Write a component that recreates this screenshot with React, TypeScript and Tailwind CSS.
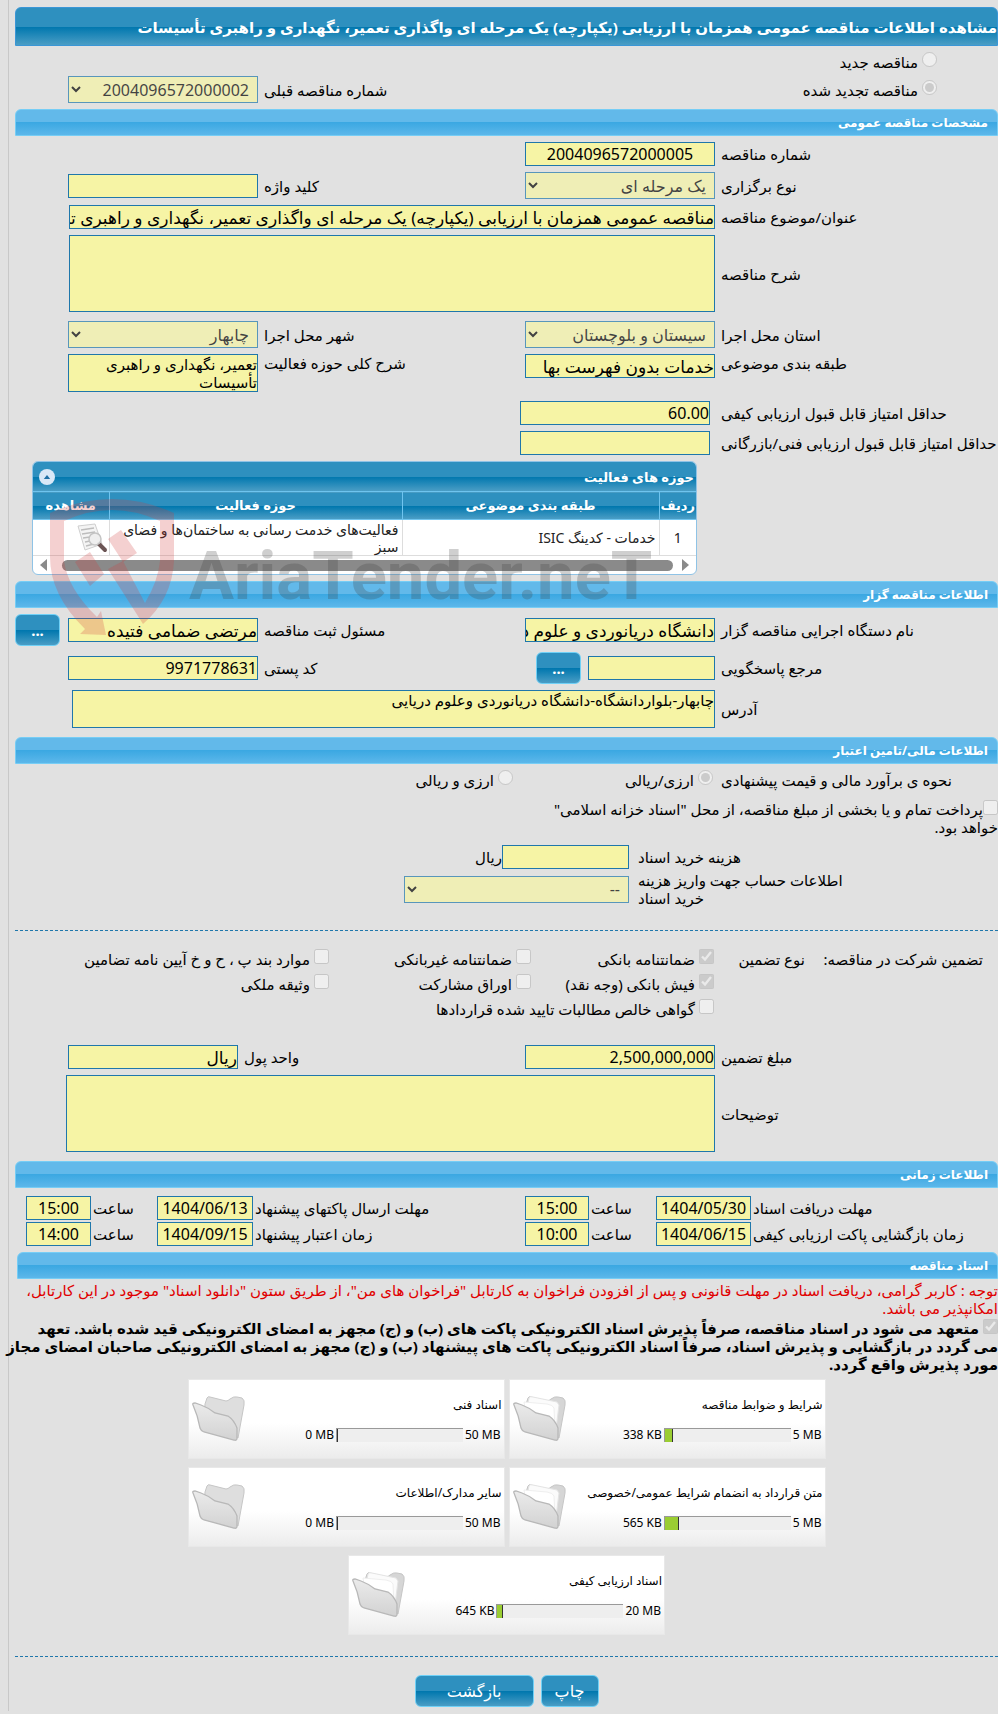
import React from 'react';
import { clsx } from 'clsx';

const BLUE = 'bg-[linear-gradient(#2e90bf_0%,#2e90bf_50%,#0077ae_51%,#4a9dc5_100%)]';
const SKY = 'bg-[linear-gradient(#62b9ea_0%,#62b9ea_48%,#3ba8e2_50%,#5cb7ea_100%)]';
const FIELD = 'block w-full min-w-0 border border-[#1f77ab] bg-[#f6f4a5] text-black outline-none';

const TITLE = 'مناقصه عمومی همزمان با ارزیابی (یکپارچه) یک مرحله ای واگذاری تعمیر، نگهداری و راهبری تأسیسات';

type FieldProps = {
  id: string;
  value?: string;
  className?: string;
};

const TextBox = ({ id, value = '', className = 'text-base' }: FieldProps) => (
  <input id={id} type="text" readOnly value={value} className={clsx(FIELD, 'h-6', className)} />
);

const Area = ({ id, value = '', className }: FieldProps) => (
  <textarea
    id={id}
    readOnly
    value={value}
    className={clsx(FIELD, 'resize-none overflow-hidden text-[15px] leading-[18px]', className)}
  />
);

const Select = ({ id, value = '' }: FieldProps) => (
  <select
    id={id}
    disabled
    className="block h-[27px] w-full border border-[#1f77ab] bg-[#f6f4a5] px-1 text-base text-black opacity-70"
  >
    <option>{value}</option>
  </select>
);

const Label = ({ htmlFor, children, className = 'pe-1.5' }: { htmlFor: string; children: React.ReactNode; className?: string }) => (
  <label htmlFor={htmlFor} className={clsx('text-end whitespace-nowrap', className)}>
    {children}
  </label>
);

const SectionHeader = ({ children, className }: { children: React.ReactNode; className?: string }) => (
  <h2
    className={clsx(
      'flex h-[27px] items-center rounded-t-md border border-[#76cdf5] px-[9px] text-xs font-bold text-white',
      SKY,
      className,
    )}
  >
    {children}
  </h2>
);

const BlueButton = ({ children, className }: { children: React.ReactNode; className?: string }) => (
  <button type="button" className={clsx('h-8 rounded-md border border-[#6fd0f6] text-white', BLUE, className)}>
    {children}
  </button>
);

type ChoiceProps = {
  type: 'radio' | 'checkbox';
  name?: string;
  label: string;
  checked?: boolean;
  className?: string;
};

const Choice = ({ type, name, label, checked = false, className }: ChoiceProps) => (
  <label className={clsx('flex items-start gap-1 whitespace-nowrap', className)}>
    <input type={type} name={name} checked={checked} disabled readOnly className="size-[15px] shrink-0" />
    <span className="pt-px">{label}</span>
  </label>
);

const ROW = 'grid grid-cols-[283px_190px_1fr_190px_53px] items-center';
const WIDE_ROW = 'grid grid-cols-[283px_1fr_54px] items-center';
const TIME_ROW = 'grid grid-cols-[247px_95px_67px_64px_1fr_96px_66px_65px_11px] items-center';

const DocumentIcon = () => (
  <svg viewBox="0 0 32 30" className="h-[30px] w-8">
    <path d="M2 3 19 1 26 21 9 27Z" fill="#f4f4f4" stroke="#cfcfcf" />
    <path d="M5 7 18 5M6 11l13-2M7 15l7-1M9 19l5-1M10 23l8-2" stroke="#bdbdbd" strokeWidth="1.5" />
    <path d="m23 21 6 6" stroke="#6b5555" strokeWidth="4" strokeLinecap="round" />
    <circle cx="19" cy="16" r="6" fill="#eee" fillOpacity=".9" stroke="#c4c4c4" strokeWidth="1.5" />
  </svg>
);

const FolderIcon = ({ full }: { full: boolean }) => (
  <svg viewBox="0 0 54 48" className="h-12 w-[54px] shrink-0">
    <defs>
      <linearGradient id="folder" x1="0" y1="0" x2="0" y2="1">
        <stop offset="0" stopColor="#ebebeb" />
        <stop offset="1" stopColor="#d2d2d2" />
      </linearGradient>
    </defs>
    <path
      d="M13 9 15 3Q16 1 18 2L34 6Q36 6 38 4 42 1 45 2L50 3Q53 5 52 10L46 43 40 40 12 26Z"
      fill={full ? '#d6d6d6' : '#dedede'}
      stroke="#c6c6c6"
    />
    {full && (
      <>
        <path d="M16 3Q17 1 20 2L44 7 46 10 43 34 12 24Z" fill="#fbfbfb" stroke="#e4e4e4" />
        <path d="M11 7 34 9Q40 10 41 13L42 34 14 26Z" fill="#fff" stroke="#efefef" />
      </>
    )}
    <path
      d="M1 10Q0 8 3 8L9 10Q17 13 23 18L36 21Q42 25 45 33V43Q45 46 42 45L12 37Q9 36 8 33 6 21 1 10Z"
      fill="url(#folder)"
      stroke="#b8b8b8"
      strokeWidth="1.3"
    />
  </svg>
);

const Watermark = () => (
  <svg viewBox="0 0 620 150" direction="ltr" className="pointer-events-none absolute top-[34px] left-3.5 z-10 h-[150px] w-[620px]">
    <g fill="#cf3b3b" fillOpacity=".24">
      <path d="M4 18Q66-10 128 18V66Q126 104 97 129L62 74 77 66 99 108Q112 86 114 66V26Q66 4 18 26V66Q22 94 51 122L55 116 60 140 34 139 39 134Q4 100 4 62Z" />
      <path d="m62 44 13-9 16 23-14 9ZM29 67l15-10 14 22-14 12Z" />
    </g>
    <text x="143" y="104" fontSize="67" className="fill-[#404040] font-[Roboto,sans-serif] font-bold" fillOpacity=".25">
      AriaTender.neT
    </text>
  </svg>
);

const ActivityTable = () => (
  <div className="relative ms-[301px] me-[17px]">
    <div className="overflow-hidden rounded-md border border-[#8fc3e6] bg-white">
      <div className={clsx('flex h-[29px] items-center justify-between ps-0.5 pe-1.5 text-[13px] font-bold text-white', BLUE)}>
        <span>حوزه های فعالیت</span>
        <button type="button" aria-label="بستن" className="flex size-4 items-center justify-center rounded-full bg-[#d9e8f7]">
          <svg viewBox="0 0 8 5" className="h-1 w-2">
            <path d="M0 5 4 0l4 5Z" fill="#1f6fa5" />
          </svg>
        </button>
      </div>
      <table className="w-full table-fixed border-collapse text-sm leading-[17px] text-[#222]">
        <colgroup>
          <col className="w-[37px]" />
          <col className="w-[257px]" />
          <col />
          <col className="w-[76px]" />
        </colgroup>
        <thead>
          <tr className={clsx('h-7 border-t border-b border-[#6fc4ef] text-[13px] whitespace-nowrap text-white', BLUE)}>
            <th className="border-e border-[#6fc4ef] p-0">ردیف</th>
            <th className="border-e border-[#6fc4ef] p-0">طبقه بندی موضوعی</th>
            <th className="border-e border-[#6fc4ef] p-0">حوزه فعالیت</th>
            <th className="p-0">مشاهده</th>
          </tr>
        </thead>
        <tbody>
          <tr className="h-9 border-b border-[#ddd]">
            <td className="border-e border-[#ddd] p-0 text-center">1</td>
            <td className="border-e border-[#ddd] px-[3px] py-0">خدمات - کدینگ ISIC</td>
            <td className="border-e border-[#ddd] px-[3px] py-0">
              فعالیت‌های خدمت رسانی به ساختمان‌ها و فضای
              <br />
              سبز
            </td>
            <td className="p-0 ps-px">
              <DocumentIcon />
            </td>
          </tr>
        </tbody>
      </table>
      <div className="flex h-[18px] items-center justify-between px-[7px]">
        <svg viewBox="0 0 7 12" className="h-3 w-[7px]">
          <path d="M0 0v12l7-6Z" fill="#8a8a8a" />
        </svg>
        <div className="ms-[9px] me-[15px] h-[11px] flex-1 rounded-full bg-[#8a8a8a]" />
        <svg viewBox="0 0 7 12" className="h-3 w-[7px]">
          <path d="M7 0v12L0 6Z" fill="#8a8a8a" />
        </svg>
      </div>
    </div>
    <Watermark />
  </div>
);

type Doc = { title: string; used: string; limit: string; usedKb: number; limitKb: number };

const docs: Doc[] = [
  { title: 'شرایط و ضوابط مناقصه', used: '338 KB', limit: '5 MB', usedKb: 338, limitKb: 5120 },
  { title: 'اسناد فنی', used: '0 MB', limit: '50 MB', usedKb: 0, limitKb: 51200 },
  { title: 'متن قرارداد به انضمام شرایط عمومی/خصوصی', used: '565 KB', limit: '5 MB', usedKb: 565, limitKb: 5120 },
  { title: 'سایر مدارک/اطلاعات', used: '0 MB', limit: '50 MB', usedKb: 0, limitKb: 51200 },
  { title: 'اسناد ارزیابی کیفی', used: '645 KB', limit: '20 MB', usedKb: 645, limitKb: 20480 },
];

const DocCard = ({ doc }: { doc: Doc }) => (
  <div className="flex h-20 w-[317px] items-center justify-between border border-[#e8e8e8] bg-[linear-gradient(#fff_0%,#fff_55%,#ececec_100%)] ps-0.5 pe-[3px]">
    <div className="flex flex-col gap-3">
      <span className="text-xs leading-5">{doc.title}</span>
      <div className="flex items-center gap-0.5 ps-px text-xs leading-4">
        <span dir="ltr">{doc.limit}</span>
        <div dir="ltr" className="h-3.5 w-[127px] border-t border-l border-[#999] bg-[#eee]">
          <div
            className="h-full border-r border-[#333] bg-[#9acd32]"
            style={{ width: `${(doc.usedKb / doc.limitKb) * 100}%`, minWidth: doc.usedKb ? 6 : 1 }}
          />
        </div>
        <span dir="ltr">{doc.used}</span>
      </div>
    </div>
    <FolderIcon full={doc.usedKb > 0} />
  </div>
);

const Divider = () => <hr className="border-t border-dashed border-[#1f77ab]" />;

export default function App() {
  return (
    <div dir="rtl" className="min-h-screen overflow-hidden bg-[#e1e1e1] pe-2 font-['Noto_Sans','DejaVu_Sans',sans-serif] text-[15px] leading-[18px] text-black">
      <main className="flex flex-col gap-1.5 border-e border-[#c8c8c8] pe-1.5 pt-[7px] pb-1">
        <h1 className={clsx('flex h-[39px] items-center overflow-hidden rounded-t-md border border-[#3a96d6] text-[15px] font-bold whitespace-nowrap text-white', BLUE)}>
          مشاهده اطلاعات {TITLE}
        </h1>

        <div>
          <Choice type="radio" name="kind" label="مناقصه جدید" className="h-6 ps-[61px]" />
          <div className={ROW}>
            <Choice type="radio" name="kind" label="مناقصه تجدید شده" checked className="ps-[61px]" />
            <span />
            <Label htmlFor="prev">شماره مناقصه قبلی</Label>
            <Select id="prev" value="2004096572000002" />
          </div>
        </div>

        <SectionHeader>مشخصات مناقصه عمومی</SectionHeader>
        <div className={ROW}>
          <Label htmlFor="number">شماره مناقصه</Label>
          <TextBox id="number" value="2004096572000005" className="text-center text-base" />
        </div>
        <div className={ROW}>
          <Label htmlFor="holding">نوع برگزاری</Label>
          <Select id="holding" value="یک مرحله ای" />
          <Label htmlFor="keyword">کلید واژه</Label>
          <TextBox id="keyword" />
        </div>
        <div className={WIDE_ROW}>
          <Label htmlFor="subject">عنوان/موضوع مناقصه</Label>
          <TextBox id="subject" value={TITLE} className="text-[17px]" />
        </div>
        <div className={clsx(WIDE_ROW, 'mb-[3px]')}>
          <Label htmlFor="desc">شرح مناقصه</Label>
          <Area id="desc" className="h-[77px]" />
        </div>
        <div className={ROW}>
          <Label htmlFor="province">استان محل اجرا</Label>
          <Select id="province" value="سیستان و بلوچستان" />
          <Label htmlFor="city">شهر محل اجرا</Label>
          <Select id="city" value="چابهار" />
        </div>
        <div className="mb-[3px] grid grid-cols-[283px_190px_1fr_190px_53px] items-start">
          <Label htmlFor="category">طبقه بندی موضوعی</Label>
          <TextBox id="category" value="خدمات بدون فهرست بها" className="text-[17px]" />
          <Label htmlFor="scope">شرح کلی حوزه فعالیت</Label>
          <Area id="scope" value="تعمیر، نگهداری و راهبری تأسیسات" className="h-[38px]" />
        </div>
        <div className="grid grid-cols-[277px_190px_1fr] items-center gap-x-[11px]">
          <Label htmlFor="min-quality" className="pe-0">حداقل امتیاز قابل قبول ارزیابی کیفی</Label>
          <TextBox id="min-quality" value="60.00" />
        </div>
        <div className="grid grid-cols-[277px_190px_1fr] items-center gap-x-[11px]">
          <Label htmlFor="min-tech" className="pe-0">حداقل امتیاز قابل قبول ارزیابی فنی/بازرگانی</Label>
          <TextBox id="min-tech" />
        </div>
        <ActivityTable />

        <SectionHeader>اطلاعات مناقصه گزار</SectionHeader>
        <div className={ROW}>
          <Label htmlFor="org">نام دستگاه اجرایی مناقصه گزار</Label>
          <TextBox id="org" value="دانشگاه دریانوردی و علوم دریایی چابهار" className="text-[17px]" />
          <Label htmlFor="registrar">مسئول ثبت مناقصه</Label>
          <TextBox id="registrar" value="مرتضی ضمامی فتیده" className="text-[17px]" />
          <BlueButton className="ms-2 font-bold">...</BlueButton>
        </div>
        <div className={ROW}>
          <Label htmlFor="contact">مرجع پاسخگویی</Label>
          <div className="flex items-center gap-[7px]">
            <div className="w-[127px]">
              <TextBox id="contact" />
            </div>
            <BlueButton className="w-[45px] shrink-0 font-bold">...</BlueButton>
          </div>
          <Label htmlFor="postal">کد پستی</Label>
          <TextBox id="postal" value="9971778631" />
        </div>
        <div className="mb-[3px] grid grid-cols-[283px_1fr_57px] items-center">
          <Label htmlFor="address">آدرس</Label>
          <Area id="address" value="چابهار-بلواردانشگاه-دانشگاه دریانوردی وعلوم دریایی" className="h-[38px]" />
        </div>

        <SectionHeader>اطلاعات مالی/تامین اعتبار</SectionHeader>
        <div className="flex h-6">
          <span className="w-[277px] pt-px text-end">نحوه ی برآورد مالی و قیمت پیشنهادی</span>
          <Choice type="radio" name="currency" label="ارزی/ریالی" checked className="ms-2 w-[200px]" />
          <Choice type="radio" name="currency" label="ارزی و ریالی" />
        </div>
        <label className="block h-[39px]">
          <input type="checkbox" disabled className="size-[15px]" />
          پرداخت تمام و یا بخشی از مبلغ مناقصه، از محل "اسناد خزانه اسلامی"
          <br />
          خواهد بود.
        </label>
        <div className="mb-[17px] flex flex-col gap-0.5">
          <div className="flex items-center">
            <Label htmlFor="fee" className="w-[360px]">هزینه خرید اسناد</Label>
            <div className="ms-[9px] w-[127px]">
              <TextBox id="fee" />
            </div>
            <span>ریال</span>
          </div>
          <div className="flex items-center">
            <Label htmlFor="account" className="w-[360px]">
              اطلاعات حساب جهت واریز هزینه
              <br />
              خرید اسناد
            </Label>
            <div className="ms-[9px] w-[225px]">
              <Select id="account" value="--" />
            </div>
          </div>
        </div>
        <Divider />

        <div className="mt-3 mb-[15px] grid auto-rows-[25px] grid-cols-[193px_91px_183px_202px_1fr] whitespace-nowrap">
          <span className="ps-[15px] pt-px">تضمین شرکت در مناقصه:</span>
          <span className="pt-px">نوع تضمین</span>
          <Choice type="checkbox" label="ضمانتنامه بانکی" checked />
          <Choice type="checkbox" label="ضمانتنامه غیربانکی" />
          <Choice type="checkbox" label="موارد بند پ ، ح و خ آیین نامه تضامین" />
          <Choice type="checkbox" label="فیش بانکی (وجه نقد)" checked className="col-start-3" />
          <Choice type="checkbox" label="اوراق مشارکت" />
          <Choice type="checkbox" label="وثیقه ملکی" />
          <Choice type="checkbox" label="گواهی خالص مطالبات تایید شده قراردادها" className="col-span-3 col-start-3" />
        </div>
        <div className="grid grid-cols-[283px_190px_1fr_170px_53px] items-center">
          <Label htmlFor="amount">مبلغ تضمین</Label>
          <TextBox id="amount" value="2,500,000,000" />
          <Label htmlFor="unit">واحد پول</Label>
          <TextBox id="unit" value="ریال" className="text-[17px]" />
        </div>
        <div className="mb-[3px] grid grid-cols-[283px_1fr_51px] items-center">
          <Label htmlFor="notes">توضیحات</Label>
          <Area id="notes" className="h-[77px]" />
        </div>

        <SectionHeader>اطلاعات زمانی</SectionHeader>
        <div className="flex flex-col gap-0.5 pt-0.5">
          <div className={TIME_ROW}>
            <Label htmlFor="d1" className="pe-0.5">مهلت دریافت اسناد</Label>
            <TextBox id="d1" value="1404/05/30" className="text-center text-base" />
            <Label htmlFor="t1" className="pe-0.5">ساعت</Label>
            <TextBox id="t1" value="15:00" className="text-center text-base" />
            <Label htmlFor="d2" className="pe-0.5">مهلت ارسال پاکتهای پیشنهاد</Label>
            <TextBox id="d2" value="1404/06/13" className="text-center text-base" />
            <Label htmlFor="t2" className="pe-0.5">ساعت</Label>
            <TextBox id="t2" value="15:00" className="text-center text-base" />
          </div>
          <div className={TIME_ROW}>
            <Label htmlFor="d3" className="pe-0.5">زمان بازگشایی پاکت ارزیابی کیفی</Label>
            <TextBox id="d3" value="1404/06/15" className="text-center text-base" />
            <Label htmlFor="t3" className="pe-0.5">ساعت</Label>
            <TextBox id="t3" value="10:00" className="text-center text-base" />
            <Label htmlFor="d4" className="pe-0.5">زمان اعتبار پیشنهاد</Label>
            <TextBox id="d4" value="1404/09/15" className="text-center text-base" />
            <Label htmlFor="t4" className="pe-0.5">ساعت</Label>
            <TextBox id="t4" value="14:00" className="text-center text-base" />
          </div>
        </div>

        <div className="flex flex-col gap-0.5 whitespace-nowrap">
          <SectionHeader className="me-0.5">اسناد مناقصه</SectionHeader>
          <p className="text-[#e00000]">
            توجه : کاربر گرامی، دریافت اسناد در مهلت قانونی و پس از افزودن فراخوان به کارتابل "فراخوان های من"، از طریق ستون "دانلود اسناد" موجود در این کارتابل،
            <br />
            امکانپذیر می باشد.
          </p>
          <label className="block font-bold">
            <input type="checkbox" checked disabled readOnly className="me-1 size-[15px]" />
            متعهد می شود در اسناد مناقصه، صرفاً پذیرش اسناد الکترونیکی پاکت های (ب) و (ج) مجهز به امضای الکترونیکی قید شده باشد. تعهد
            <br />
            می گردد در بازگشایی و پذیرش اسناد، صرفاً اسناد الکترونیکی پاکت های پیشنهاد (ب) و (ج) مجهز به امضای الکترونیکی صاحبان امضای مجاز
            <br />
            مورد پذیرش واقع گردد.
          </label>
        </div>

        <div className="mx-auto mb-[15px] flex max-w-[640px] flex-wrap justify-center gap-x-1 gap-y-2">
          {docs.map((doc) => (
            <DocCard key={doc.title} doc={doc} />
          ))}
        </div>
        <Divider />
        <div className="mt-3 flex justify-center gap-[7px]">
          <BlueButton className="w-[58px] text-base">چاپ</BlueButton>
          <BlueButton className="w-[119px] text-base">بازگشت</BlueButton>
        </div>
      </main>
    </div>
  );
}
